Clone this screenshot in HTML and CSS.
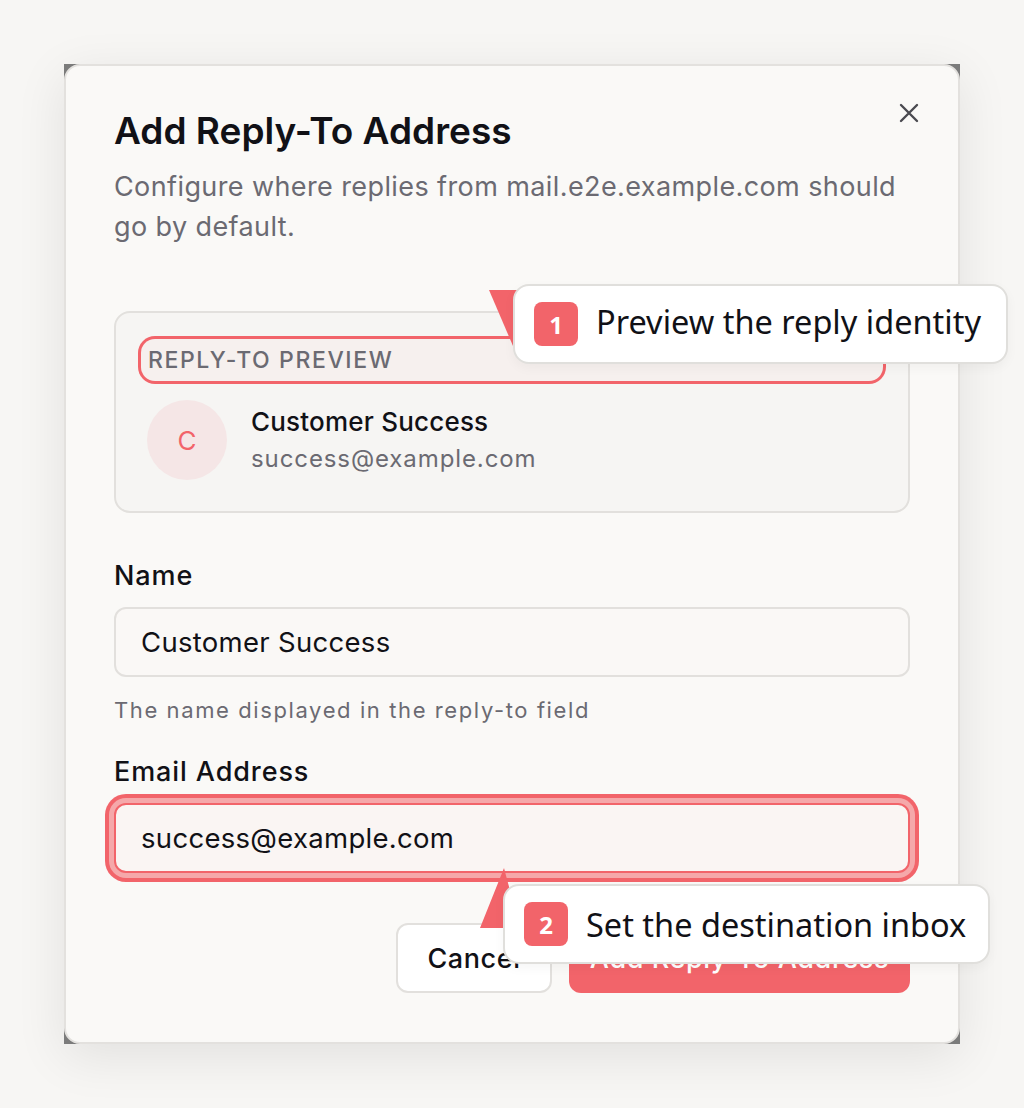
FILE: index.html
```html
<!DOCTYPE html>
<html lang="en">
<head>
<meta charset="utf-8">
<title>Add Reply-To Address</title>
<link rel="stylesheet" href="styles.css">
</head>
<body>
<div class="page">
  <div class="frame">
    <div class="dialog">
      <button class="close" aria-label="Close">
        <svg width="24" height="24" viewBox="0 0 24 24"><path d="M4 4 L20 20 M20 4 L4 20" stroke="#4a4a50" stroke-width="2.4" stroke-linecap="round" fill="none"/></svg>
      </button>
      <h1 class="title">Add Reply-To Address</h1>
      <p class="subtitle">Configure where replies from mail.e2e.example.com should go by default.</p>

      <div class="preview">
        <div class="preview-label">REPLY-TO PREVIEW</div>
        <div class="identity">
          <div class="avatar">C</div>
          <div class="identity-text">
            <div class="identity-name">Customer Success</div>
            <div class="identity-email">success@example.com</div>
          </div>
        </div>
      </div>

      <div class="field">
        <label class="field-label">Name</label>
        <div class="input">Customer Success</div>
        <div class="helper">The name displayed in the reply-to field</div>
      </div>

      <div class="field field-email">
        <label class="field-label">Email Address</label>
        <div class="input input-focus">success@example.com</div>
      </div>

      <div class="actions">
        <button class="btn btn-secondary">Cancel</button>
        <button class="btn btn-primary">Add Reply-To Address</button>
      </div>
    </div>
  </div>
</div>

<svg class="pointer pointer-1" width="60" height="70" viewBox="0 0 60 70"><polygon points="0,0 45,0 24,56" fill="#f2646a"/></svg>
<div class="callout callout-1"><span class="badge">1</span><span class="callout-text">Preview the reply identity</span></div>

<svg class="pointer pointer-2" width="60" height="70" viewBox="0 0 60 70"><polygon points="24,0 0,60 40,60" fill="#f2646a"/></svg>
<div class="callout callout-2"><span class="badge">2</span><span class="callout-text callout-text-2">Set the destination inbox</span></div>
</body>
</html>
```

FILE: styles.css
```css
* { box-sizing: border-box; }

html, body {
  margin: 0;
  padding: 0;
  background: #f7f6f4;
  font-family: Inter, "Noto Sans", sans-serif;
  color: #111116;
}

.page {
  padding: 64px;
  width: 1024px;
  height: 1108px;
}

.frame {
  width: 896px;
  background: #7b7b7b;
  box-shadow: 0 12px 48px rgba(0, 0, 0, 0.09);
}

.dialog {
  position: relative;
  background: #faf9f7;
  border: 2px solid #e3e1de;
  border-radius: 16px;
  padding: 45px 48px 49px 48px;
}

.close {
  position: absolute;
  top: 35px;
  right: 37px;
  width: 24px;
  height: 24px;
  padding: 0;
  border: 0;
  background: transparent;
  display: flex;
}

.title {
  margin: 0 0 16px;
  font-size: 37px;
  line-height: 40px;
  font-weight: 600;
  color: #111116;
}

.subtitle {
  margin: 0;
  font-size: 27px;
  line-height: 40px;
  color: #6b6a72;
  letter-spacing: 0.4px;
}

.preview {
  margin-top: 64px;
  background: #f6f5f3;
  border: 2px solid #e2e0dd;
  border-radius: 16px;
  padding: 26px 25px 31px;
}

.preview-label {
  height: 42px;
  display: flex;
  align-items: center;
  padding-left: 7px;
  font-size: 23px;
  font-weight: 500;
  letter-spacing: 1.6px;
  color: #6b6a72;
  background: #f6f0ee;
  border-radius: 14px;
  box-shadow: 0 0 0 3px #f2646a;
  margin-bottom: 19px;
}

.identity {
  display: flex;
  align-items: center;
  gap: 24px;
  padding-left: 6px;
}

.avatar {
  width: 80px;
  height: 80px;
  border-radius: 50%;
  background: #f5e6e6;
  color: #f2646a;
  font-size: 26px;
  display: flex;
  align-items: center;
  justify-content: center;
}

.identity-name {
  font-size: 26px;
  line-height: 32px;
  font-weight: 450;
  letter-spacing: 0.2px;
}

.identity-email {
  margin-top: 6px;
  font-size: 24px;
  line-height: 30px;
  color: #6b6a72;
  letter-spacing: 0.9px;
}

.field {
  margin-top: 47px;
}

.field-email {
  margin-top: 32px;
}

.field-label {
  display: block;
  font-size: 27px;
  line-height: 32px;
  font-weight: 450;
  letter-spacing: 0.9px;
  margin-bottom: 15px;
}

.input {
  height: 70px;
  border: 2px solid #e2e0dd;
  border-radius: 12px;
  background: #faf8f6;
  display: flex;
  align-items: center;
  padding-left: 25px;
  font-size: 27.5px;
  letter-spacing: 0.3px;
  color: #111116;
}

.input-focus {
  border-color: #f2646a;
  background: #faf5f3;
  box-shadow: 0 0 0 5px #f5a8aa, 0 0 0 9px #f2646a;
}

.helper {
  margin-top: 19px;
  font-size: 22px;
  line-height: 28px;
  color: #6b6a72;
  letter-spacing: 1.6px;
}

.actions {
  margin-top: 50px;
  display: flex;
  justify-content: flex-end;
  gap: 17px;
}

.btn {
  height: 70px;
  border-radius: 12px;
  font-family: Inter, sans-serif;
  font-size: 27px;
  font-weight: 450;
  letter-spacing: 0.6px;
  padding: 0;
}

.btn-secondary {
  width: 156px;
  background: #ffffff;
  border: 2px solid #e2e0dd;
  color: #111116;
}

.btn-primary {
  width: 341px;
  background: #f2646a;
  border: 0;
  color: #ffffff;
}

.pointer {
  position: absolute;
}

.pointer-1 {
  left: 489px;
  top: 290px;
}

.pointer-2 {
  left: 480px;
  top: 868px;
}

.callout {
  position: absolute;
  height: 80px;
  background: #ffffff;
  border: 2px solid #e0dfdc;
  border-radius: 16px;
  display: flex;
  align-items: center;
  padding-left: 19px;
  gap: 18px;
  font-family: "Noto Sans", "Open Sans", sans-serif;
  box-shadow: 0 4px 12px rgba(0, 0, 0, 0.04);
}

.callout-1 {
  left: 513px;
  top: 284px;
  width: 495px;
}

.callout-2 {
  left: 503px;
  top: 884px;
  width: 487px;
}

.badge {
  width: 44px;
  height: 44px;
  border-radius: 8px;
  background: #f2646a;
  color: #ffffff;
  font-size: 24px;
  font-weight: 700;
  display: flex;
  align-items: center;
  justify-content: center;
}

.callout-text {
  font-size: 32.5px;
  line-height: 44px;
  margin-top: -4px;
  color: #111116;
  white-space: nowrap;
}

.callout-text-2 {
  margin-top: 2px;
}
```
